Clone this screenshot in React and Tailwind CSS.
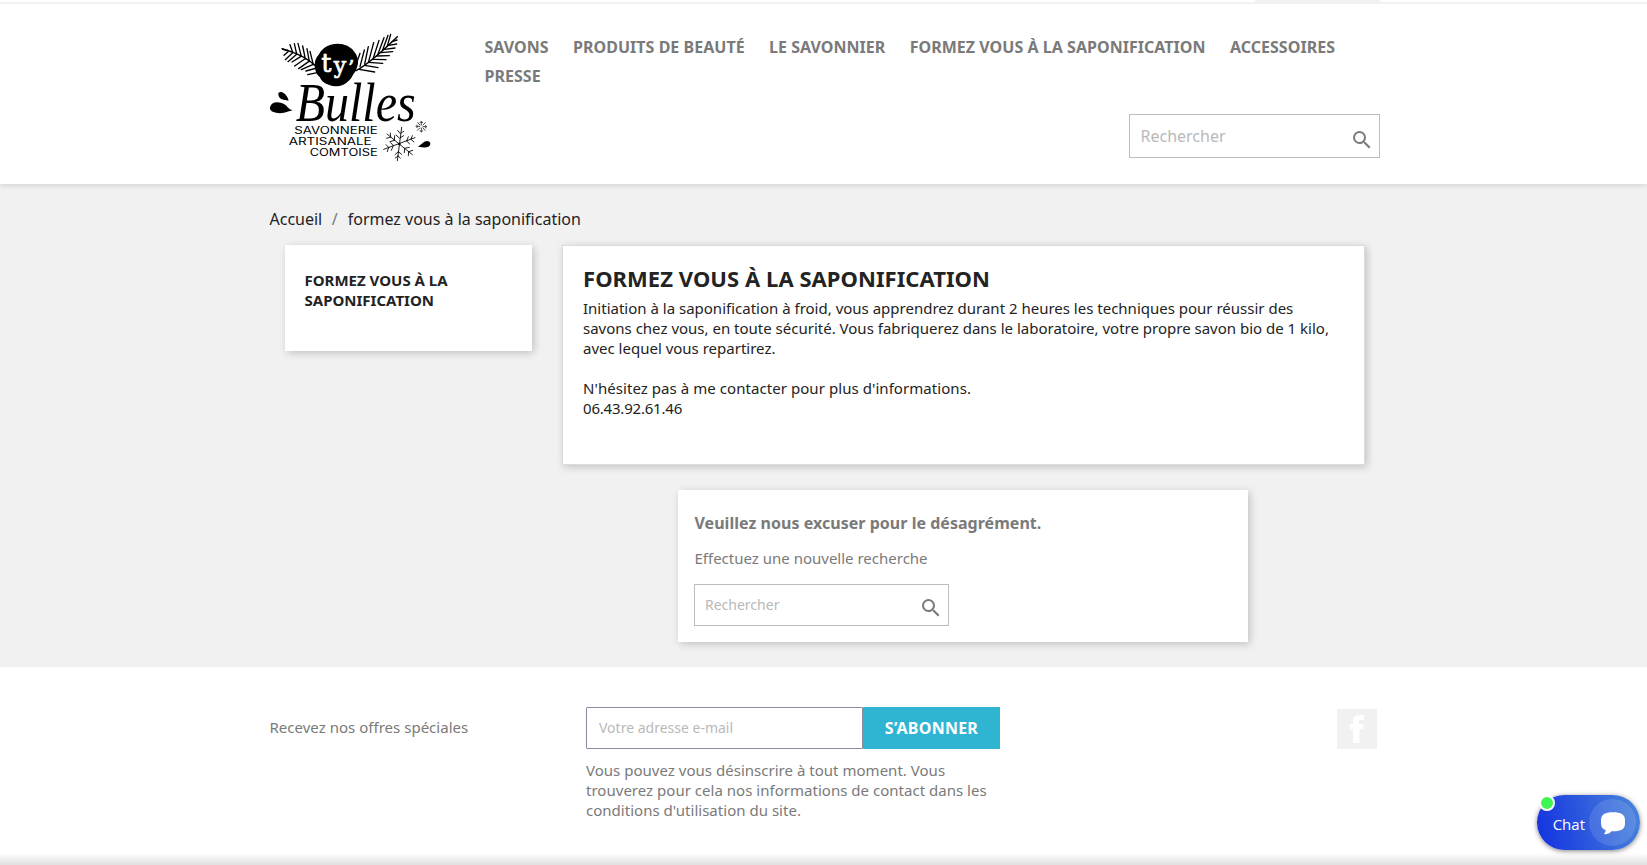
import React from "react";

const NAV = [
  "SAVONS",
  "PRODUITS DE BEAUTÉ",
  "LE SAVONNIER",
  "FORMEZ VOUS À LA SAPONIFICATION",
  "ACCESSOIRES",
  "PRESSE",
];

function Logo() {
  return (
    <svg className="h-[140px] w-[160px] shrink-0 overflow-visible" viewBox="30 30 480 420" fill="none" stroke="#000" strokeLinecap="round">
      {/* left branch */}
      <path strokeWidth="4.5" d="M172 142Q130 102 68 88" />
      <path
        strokeWidth="4"
        d="M84 95L72 106M98 98L76 119M110 103L84 125M122 110L96 126M134 117L104 138M146 125L116 146M158 134L124 149M170 144L138 153M172 158L143 164M84 91L66 86M98 97L90 74M110 102L103 71M124 109L114 70M136 117L128 78M148 125L141 86M160 134L150 94"
      />
      {/* right branch */}
      <path strokeWidth="4.5" d="M288 152Q332 128 412 50" />
      <path
        strokeWidth="4"
        d="M288 134L300 100M300 140L313 90M314 132L325 80M326 124L341 68M340 114L357 61M354 102L372 53M368 90L384 46M382 78L392 43M396 65L411 60M386 76L410 72M374 88L405 84M362 98L398 95M350 108L388 107M338 118L378 119M326 127L368 130M314 136L354 143M298 148L344 156"
      />
      {/* badge */}
      <path
        fill="#000"
        stroke="none"
        d="M212 74Q240 68 262 77Q276 84 284 97Q295 111 294 130Q291 150 280 163Q270 185 250 194Q228 204 206 194Q186 188 179 171Q165 160 164 137Q164 116 176 104Q188 80 212 74Z"
      />
      <g fill="#000" stroke="none">
        <text fill="#fff" stroke="#fff" strokeWidth="2" className="font-['DejaVu_Serif',serif]">
          <tspan x="184" y="156" fontSize="76">t</tspan>
          <tspan x="221" y="158" fontSize="66">y</tspan>
          <tspan x="264" y="166" fontSize="60">’</tspan>
        </text>
        <text x="107" y="304" fontSize="167" fontStyle="italic" textLength="360" lengthAdjust="spacingAndGlyphs" className="font-['Liberation_Serif',serif]">
          Bulles
        </text>
        <g fontSize="29" className="font-[Inter,sans-serif]">
          <text x="103" y="341" textLength="250" lengthAdjust="spacingAndGlyphs">SAVONNERIE</text>
          <text x="86" y="375" textLength="249" lengthAdjust="spacingAndGlyphs">ARTISANALE</text>
          <text x="149" y="408" textLength="204" lengthAdjust="spacingAndGlyphs">COMTOISE</text>
        </g>
        {/* drops */}
        <path d="M55 219Q62 213 71 219Q83 228 86 242Q80 240 70 239Q53 235 55 219Z" />
        <path d="M30 262Q34 247 52 247Q74 248 83 262Q89 269 98 271Q84 275 72 278Q54 282 38 275Q28 270 30 262Z" />
        <path d="M474 380Q484 372 493 365Q505 360 511 368Q512 379 500 382Q489 383 474 380Z" />
      </g>
      {/* large snowflake */}
      <path
        strokeWidth="2.6"
        d="M425 322L412 422M371 388L465 353M381 342L457 404M420 340L413 331M422 340L431 334M418 354L408 345M420 354L431 347M415 395L405 404M415 395L425 403M414 408L406 414M414 408L421 414M386 382L378 374M386 382L382 395M400 377L392 368M400 377L394 391M440 363L445 350M440 363L449 372M453 358L457 347M453 358L462 366M392 351L391 339M392 351L380 355M403 361L404 347M403 361L390 365M434 385L448 382M434 385L433 398M446 395L458 391M446 395L445 407"
      />
      <circle cx="418" cy="372" r="4" fill="#000" stroke="none" />
      {/* small snowflake */}
      <path
        strokeWidth="3"
        stroke="#444"
        d="M484 304V315M484 324V336M468 319H479M489 320H500M473 308L480 315M489 324L495 331M496 308L489 315M472 331L479 324M480 307H488M480 333H488M471 315V323M497 316V324"
      />
    </svg>
  );
}

function SearchIcon({ className }) {
  return (
    <svg className={`size-6 shrink-0 ${className}`} viewBox="0 0 24 24" fill="#7a7a7a">
      <path d="M15.5 14h-.79l-.28-.27A6.471 6.471 0 0 0 16 9.5 6.5 6.5 0 1 0 9.5 16c1.61 0 3.09-.59 4.23-1.57l.27.28v.79l5 4.99L20.49 19l-4.99-5zm-6 0C7.01 14 5 11.99 5 9.5S7.01 5 9.5 5 14 7.01 14 9.5 11.99 14 9.5 14z" />
    </svg>
  );
}

const cardShadow = "shadow-[2px_2px_8px_0_rgba(0,0,0,0.2)]";

export default function App() {
  return (
    <div className="relative flex h-[865px] w-full flex-col overflow-hidden bg-[#f1f1f1] font-['Noto_Sans',sans-serif] text-[#7a7a7a]">
      <header className="relative z-10 h-[184px] shrink-0 bg-white shadow-[0_2px_5px_0_rgba(0,0,0,0.11)]">
        <div className="h-1 border-b-2 border-[#f1f1f1]">
          <div className="ml-[1255px] h-0.5 w-[125px] bg-[#f1f1f1]" />
        </div>
        <div className="ml-[270px] flex w-[1110px] pt-[26px]">
          <Logo />
          <div className="ml-[54.500px] flex grow flex-col pt-[3px]">
            <nav className="flex flex-wrap gap-x-[24.300px] text-base leading-[29px] font-bold tracking-[0.035px]">
              {NAV.map((item) => (
                <a key={item}>{item}</a>
              ))}
            </nav>
            <div className="mt-[23px] flex h-11 w-[251px] items-center justify-between self-end border border-[#bdbdbd] pr-[5px] pl-[10.500px]">
              <span className="text-base leading-5 text-[#b9b9b9]">Rechercher</span>
              <SearchIcon className="mt-2" />
            </div>
          </div>
        </div>
      </header>

      <main className="h-[483px] shrink-0 pl-[269px]">
        <div className="flex h-[61px] pt-[23px] text-base leading-6 text-[#232323]">
          <span className="ml-[0.500px]">Accueil</span>
          <span className="mr-[10px] ml-[9.500px] text-[#7a7a7a]">/</span>
          <span>formez vous à la saponification</span>
        </div>
        <div className="flex items-start pl-4">
          <aside className={`h-[106px] w-[247px] bg-white px-[19.500px] pt-[25px] text-[15px] leading-5 font-bold text-[#232323] ${cardShadow}`}>
            FORMEZ VOUS À LA SAPONIFICATION
          </aside>
          <div className="ml-[30px] w-[803px]">
            <section className={`h-[220px] border border-[#dcdcdc] bg-white px-5 pt-[19px] text-[#232323] ${cardShadow}`}>
              <h1 className="text-[22px] leading-[27px] font-bold tracking-[0.050px]">FORMEZ VOUS À LA SAPONIFICATION</h1>
              <div className="mt-[6px] text-[15px] leading-5">
                <p>
                  Initiation à la saponification à froid, vous apprendrez durant 2 heures les techniques pour réussir des
                  savons chez vous, en toute sécurité. Vous fabriquerez dans le laboratoire, votre propre savon bio de 1
                  kilo, avec lequel vous repartirez.
                </p>
                <p className="mt-5 tracking-[0.060px]">N'hésitez pas à me contacter pour plus d'informations.</p>
                <p className="tracking-[-0.200px]">06.43.92.61.46</p>
              </div>
            </section>
            <section className={`mt-[25px] ml-[116px] h-[152px] w-[570px] bg-white pt-[23px] pl-4 ${cardShadow}`}>
              <h2 className="pl-[0.500px] text-base leading-5 font-bold tracking-[0.030px]">Veuillez nous excuser pour le désagrément.</h2>
              <p className="mt-[15px] pl-[0.500px] text-[15px] leading-5">Effectuez une nouvelle recherche</p>
              <div className="mt-4 flex h-[42px] w-[255px] items-center justify-between border border-[#bdbdbd] pr-[5px] pl-2.5">
                <span className="text-sm leading-5 text-[#b9b9b9]">Rechercher</span>
                <SearchIcon className="mt-1.5" />
              </div>
            </section>
          </div>
        </div>
      </main>

      <footer className="flex h-[198px] shrink-0 items-start bg-white pt-10 pl-[269.500px]">
        <p className="w-[316.500px] pt-[10px] text-[15px] leading-5 tracking-[0.020px]">Recevez nos offres spéciales</p>
        <div className="w-[414px]">
          <div className="flex h-[42px]">
            <div className="flex w-[277px] items-center rounded-[1px] border border-[#8d8b9d] pl-3 text-sm text-[#b9b9b9]">
              Votre adresse e-mail
            </div>
            <button className="w-[137px] bg-[#2fb5d2] text-base leading-5 font-bold tracking-[0.250px] text-white">S’ABONNER</button>
          </div>
          <p className="mt-[11px] text-[15px] leading-5 tracking-[0.020px]">
            Vous pouvez vous désinscrire à tout moment. Vous trouverez pour cela nos informations de contact dans les
            conditions d'utilisation du site.
          </p>
        </div>
        <div className="mt-[2px] ml-[337px] size-10 bg-[#f1f1f1]">
          <svg className="size-10" viewBox="0 0 40 40" fill="#fff">
            <path d="M16 34V20H13V15H16V12.5Q16 6 22 6H27V11H24Q22 11 22 13V15H26.5L26 20H22.5V34Z" />
          </svg>
        </div>
      </footer>

      <div className="absolute inset-x-0 bottom-0 h-3 bg-linear-to-b from-transparent to-black/12" />

      <div className="absolute top-[795px] left-[1537px] flex h-[55px] w-[103px] items-center justify-end rounded-full bg-linear-[75deg,#1230e0,#4a86db] pr-1 shadow-[0_1px_5px_rgba(0,0,0,0.5)]">
        <span className="mr-1 pt-0.5 font-['Open_Sans',sans-serif] text-[15px] leading-5 text-white">Chat</span>
        <span className="flex size-[47px] items-center justify-center rounded-full bg-white/12">
          <svg className="size-6" viewBox="0 0 24 24" fill="#fff">
            <path d="M12 1.200C20 1.200 24 3.500 24 9V12.500C24 18 20 20.300 12 20.300H10.500Q8 23.300 3.500 23.200Q2.500 22.500 4 21.500L4.800 19.300Q0 17.500 0 12.500V9C0 3.500 4 1.200 12 1.200Z" />
          </svg>
        </span>
        <span className="absolute top-0 left-[2px] size-4 rounded-full border-2 border-white bg-[#3ff551]" />
      </div>
    </div>
  );
}
